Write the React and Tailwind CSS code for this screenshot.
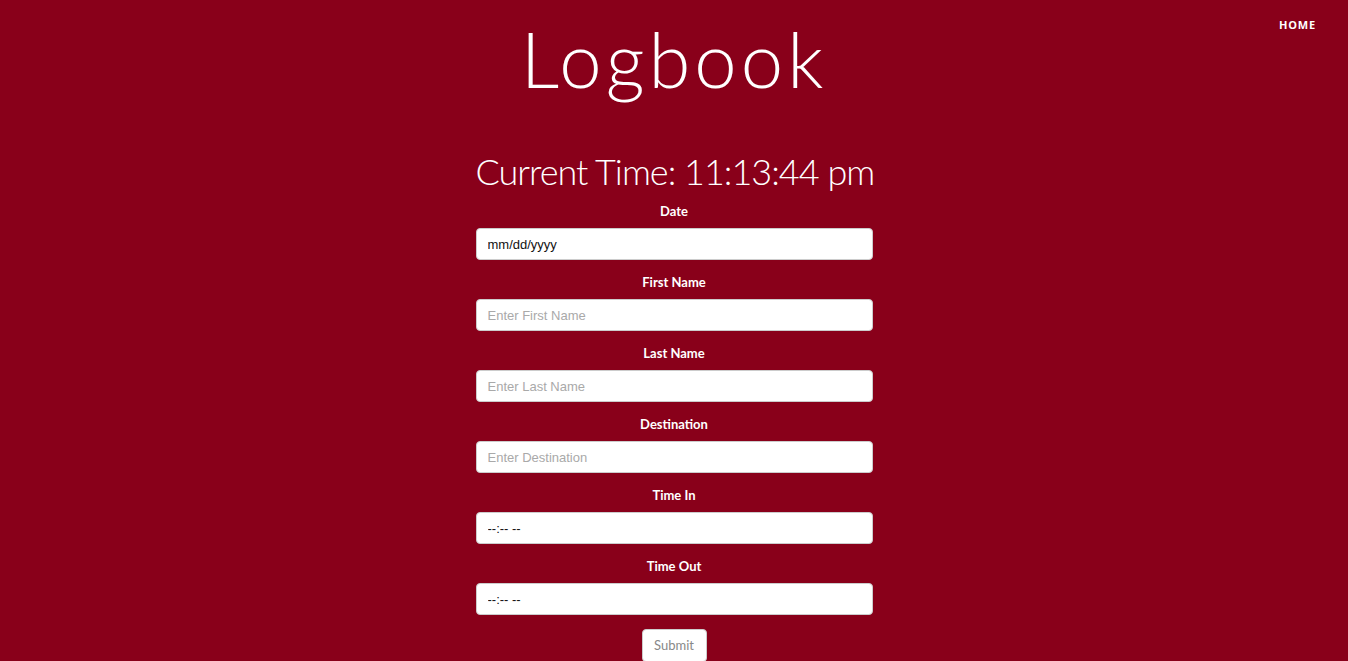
import React from "react";

const fields = [
  { label: "Date", value: "mm/dd/yyyy" },
  { label: "First Name", placeholder: "Enter First Name" },
  { label: "Last Name", placeholder: "Enter Last Name" },
  { label: "Destination", placeholder: "Enter Destination" },
  { label: "Time In", value: "--:-- --" },
  { label: "Time Out", value: "--:-- --" },
];

export default function App() {
  return (
    <div className="min-h-[661px] bg-[#89001a] font-[Lato] text-white">
      <header className="grid grid-cols-[1fr_auto_1fr] items-start">
        <div />
        <h1 className="pt-[14px] text-[76px] leading-[90px] font-light tracking-[4px] text-white font-[Lato]">
          Logbook
        </h1>
        <nav className="justify-self-end pr-[32px] pt-[11px]">
          <a className="font-['Open_Sans'] text-[11px] font-bold tracking-[0.8px] text-white">HOME</a>
        </nav>
      </header>

      <main className="mx-auto mt-[45px] w-[397px]">
        <h2 className="whitespace-nowrap text-center font-[Lato] text-[36px] leading-[44px] font-light tracking-[-1px] text-white">
          Current Time: 11:13:44 pm
        </h2>
        <form className="mt-[10px] flex flex-col">
          {fields.map((f) => (
            <div key={f.label} className="mb-[14px] flex flex-col">
              <label className="mb-2 text-center font-[Lato] text-[13px] leading-[17px] font-bold text-white">
                {f.label}
              </label>
              <input
                type="text"
                readOnly
                defaultValue={f.value}
                placeholder={f.placeholder}
                className="h-[32px] w-full rounded-[4px] border border-[#cccccc] bg-white px-[11px] font-['Liberation_Sans'] text-[13px] text-[#111] outline-none placeholder:text-[#a9a9a9]"
              />
            </div>
          ))}
          <div className="flex justify-center">
            <button type="button" className="h-[33px] w-[65px] rounded-[4px] border border-[#cccccc] bg-white font-[Lato] text-[13px] text-[#888]">
              Submit
            </button>
          </div>
        </form>
      </main>
    </div>
  );
}
